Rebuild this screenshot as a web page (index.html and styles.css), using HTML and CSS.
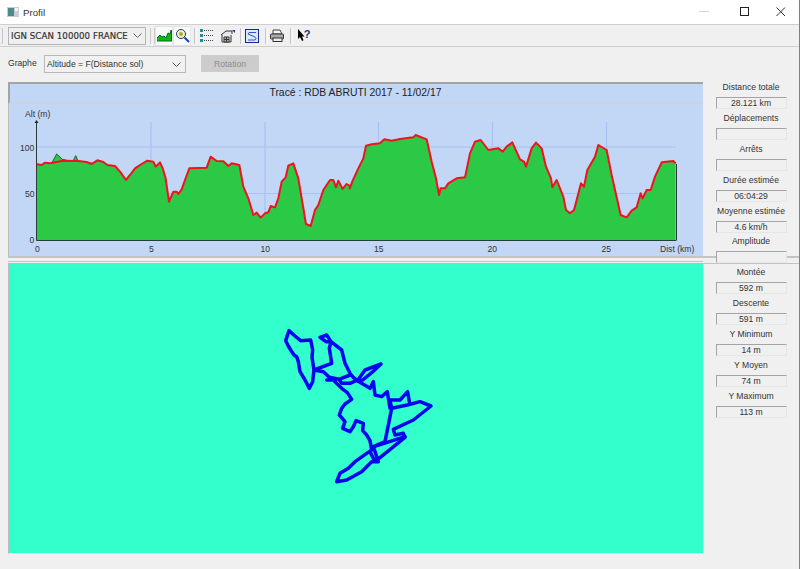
FILE: index.html
```html
<!DOCTYPE html>
<html lang="fr">
<head>
<meta charset="utf-8">
<title>Profil</title>
<link rel="stylesheet" href="styles.css">
</head>
<body>
<div class="app">
  <header class="titlebar">
    <svg class="app-icon" width="12" height="10" viewBox="0 0 12 10"><rect width="12" height="10" fill="#c9ced2"/><rect x="1" y="1" width="6" height="8" fill="#4d8a8a"/><rect x="8" y="1" width="3" height="3" fill="#f4f4f4"/></svg>
    <span class="title-text">Profil</span>
    <div class="win-controls">
      <svg class="win-btn" width="46" height="24" viewBox="0 0 46 24"><path d="M18 11.500h10" stroke="#d5d5d5"/></svg>
      <svg class="win-btn" width="36" height="24" viewBox="0 0 36 24"><rect x="13.500" y="7.500" width="8" height="8" fill="none" stroke="#222"/></svg>
      <svg class="win-btn" width="36" height="24" viewBox="0 0 36 24"><path d="M13.500 7.500l8.500 8.500M22 7.500l-8.500 8.500" stroke="#333" fill="none"/></svg>
    </div>
  </header>

  <nav class="toolbar">
    <span class="tb-stub"></span>
    <div class="tb-combo"><span class="tb-combo-text">IGN SCAN 100000 FRANCE</span>
      <svg width="9" height="5" viewBox="0 0 9 5"><path d="M.5 .5l4 4 4-4" fill="none" stroke="#666"/></svg>
    </div>
    <span class="tb-sep first"></span>
    <span class="tb-btn active">
      <svg width="15" height="13" viewBox="0 0 15 13"><path d="M0 12V9l3-3 2 2 2-1 2 2 2-5 2 1 1-4v11z" fill="#12b812"/><path d="M0 12h15M14.500 12V1M0 9l3-3 2 2 2-1 2 2 2-5 2 1 1-4" fill="none" stroke="#063"/></svg>
    </span>
    <span class="tb-btn active">
      <svg width="15" height="15" viewBox="0 0 15 15"><circle cx="6" cy="6" r="4.500" fill="#e8f2d8" stroke="#245"/><circle cx="6" cy="6" r="2" fill="#b9a32c"/><path d="M9.500 9.500l4.500 4.500" stroke="#1c3fc0" stroke-width="2"/></svg>
    </span>
    <span class="tb-sep tight"></span>
    <span class="tb-icon wide">
      <svg width="14" height="13" viewBox="0 0 14 13"><g fill="#1f8f8f"><rect y="0" width="3" height="3"/><rect y="5" width="3" height="3"/><rect y="10" width="3" height="3"/></g><path d="M4 1.500h10M4 6.500h10M4 11.500h10" stroke="#445" stroke-dasharray="1 1"/></svg>
    </span>
    <span class="tb-icon wide">
      <svg width="15" height="14" viewBox="0 0 15 14"><path d="M1 6l5-4h6v3M2 6v7h9V6" fill="#e8e8e8" stroke="#333"/><path d="M4 8h5v5H4z" fill="#bbb" stroke="#333"/><path d="M6.500 8v5M4 10.500h5" stroke="#333"/><path d="M12 1h3v3z" fill="#123a9c"/></svg>
    </span>
    <span class="tb-sep"></span>
    <span class="tb-icon">
      <svg width="14" height="14" viewBox="0 0 14 14"><rect x=".5" y=".5" width="13" height="13" fill="#dfe8fa" stroke="#1428a0"/><path d="M11 3.500H4L3 5l7 3 1 1.500-1 1.500H3" fill="none" stroke="#2b55c9"/></svg>
    </span>
    <span class="tb-sep"></span>
    <span class="tb-icon">
      <svg width="14" height="13" viewBox="0 0 14 13"><path d="M3 5V1h7l2 4z" fill="#f4f4f4" stroke="#444"/><rect x=".5" y="5" width="13" height="5" rx="1" fill="#aaa" stroke="#333"/><rect x="3" y="9" width="9" height="3.500" fill="#eee" stroke="#333"/></svg>
    </span>
    <span class="tb-sep"></span>
    <span class="tb-icon help">
      <svg width="7" height="13" viewBox="0 0 7 13"><path d="M0 0v10l2-2 2 4 1.500-.7L4 7.500h2.500z" fill="#000"/></svg>
      <span class="help-mark">?</span>
    </span>
  </nav>

  <main class="main">
    <section class="left">
      <div class="controls">
        <label class="graph-label">Graphe</label>
        <div class="select">
          <span>Altitude = F(Distance sol)</span>
          <svg width="9" height="5" viewBox="0 0 9 5"><path d="M.5 .5l4 4 4-4" fill="none" stroke="#555"/></svg>
        </div>
        <button class="rotation" disabled>Rotation</button>
      </div>

      <div class="trace-title">Tracé : RDB ABRUTI 2017 - 11/02/17</div>

      <svg class="chart" width="695" height="152" viewBox="9 104 694 152">
        <g stroke="#a8c0f4" stroke-width="1.200" fill="none">
          <path d="M37 147H676M37 193.500H676"/>
          <path d="M151 122V240M265 122V240M378.500 122V240M492.500 122V240M606.500 122V240"/>
        </g>
        <g transform="translate(0 100) scale(.33333)">
          <path class="peak" d="M155 190L170 162L187 178L205 182L220 182L227 167L235 185L155 192Z"/>
          <path class="notch" d="M112 195L118 206L125 195ZM266 188L272 201L280 190ZM606 203L612 216L620 203Z"/>
          <path class="area" d="M111 420V193L125 195L135 188L150 190L165 187L190 182L235 183L260 186L275 192L292 181L310 186L322 195L345 198L360 215L378 240L390 225L405 205L420 195L442 182L460 185L467 200L480 187L488 205L497 235L507 305L520 275L530 275L535 282L545 268L555 240L568 205L620 203L632 170L650 183L670 184L685 198L695 190L718 195L730 260L745 295L760 345L770 338L782 353L795 340L805 337L812 318L825 322L835 295L845 245L857 232L865 197L880 190L895 235L918 372L932 378L945 330L955 315L970 270L990 240L1000 240L1008 262L1015 242L1028 267L1040 252L1050 258V420Z"/>
          <path class="curve" d="M111 193L125 195L135 188L150 190L165 187L190 182L235 183L260 186L275 192L292 181L310 186L322 195L345 198L360 215L378 240L390 225L405 205L420 195L442 182L460 185L467 200L480 187L488 205L497 235L507 305L520 275L530 275L535 282L545 268L555 240L568 205L620 203L632 170L650 183L670 184L685 198L695 190L718 195L730 260L745 295L760 345L770 338L782 353L795 340L805 337L812 318L825 322L835 295L845 245L857 232L865 197L880 190L895 235L918 372L932 378L945 330L955 315L970 270L990 240L1000 240L1008 262L1015 242L1028 267L1040 252L1050 258"/>
        </g>
        <g transform="translate(350 100) scale(.33333)">
          <path class="area" d="M0 420V265L8 242L25 205L40 175L48 137L65 133L90 130L103 118L125 122L150 117L190 112L197 105L230 118L245 185L258 235L267 285L272 265L285 265L295 250L320 235L345 232L360 160L375 125L392 120L415 150L445 145L458 155L470 140L487 127L510 178L522 185L528 200L545 145L558 128L575 145L588 200L603 235L607 262L620 240L640 290L648 330L660 340L672 330L680 300L693 250L702 260L712 210L735 170L745 135L770 150L785 225L812 345L830 352L845 332L860 322L872 280L878 295L890 270L902 270L915 230L935 187L970 183L977 190V420Z"/>
          <path class="curve" d="M-2 268L8 242L25 205L40 175L48 137L65 133L90 130L103 118L125 122L150 117L190 112L197 105L230 118L245 185L258 235L267 285L272 265L285 265L295 250L320 235L345 232L360 160L375 125L392 120L415 150L445 145L458 155L470 140L487 127L510 178L522 185L528 200L545 145L558 128L575 145L588 200L603 235L607 262L620 240L640 290L648 330L660 340L672 330L680 300L693 250L702 260L712 210L735 170L745 135L770 150L785 225L812 345L830 352L845 332L860 322L872 280L878 295L890 270L902 270L915 230L935 187L970 183L977 190"/>
        </g>
        <path class="axis" d="M36.500 122V240.500H676M676.500 164V240.500"/>
        <path class="arrow" d="M36.500 120l-2 3h4z"/>
        <g class="chart-text">
          <text x="25" y="117">Alt (m)</text>
          <text x="20" y="150.500">100</text>
          <text x="25" y="196.500">50</text>
          <text x="29.500" y="243">0</text>
          <text x="35" y="251.500">0</text>
          <text x="149" y="251.500">5</text>
          <text x="260.500" y="251.500">10</text>
          <text x="374" y="251.500">15</text>
          <text x="487.500" y="251.500">20</text>
          <text x="601.500" y="251.500">25</text>
          <text x="660" y="251.500">Dist (km)</text>
        </g>
      </svg>

      <div class="splitter"></div>

      <svg class="map" width="695" height="291" viewBox="9 263 694 290">
        <g transform="translate(270 320) scale(.33333)">
          <path class="route" d="M57 32L47 62L55 78L62 90L72 105L80 110L85 125L90 155L105 180L118 205L128 185L132 150L126 112L128 90L122 60L92 62L75 48L57 32Z"/>
          <path class="route" d="M132 150L185 130L178 85L183 65L168 65L150 52L170 45L183 65L215 90L225 130L240 160L250 172L262 182L285 150L333 132L305 158L278 180L258 182L240 190L215 190L207 178L240 165"/>
          <path class="route" d="M132 150L160 155L178 172L207 178M170 180L190 180L215 205L232 218L245 238L225 252L215 265L208 285L225 305L218 325L240 335L250 320L258 302L280 310L278 332L290 345L300 362L305 390L290 400L255 425L235 445L210 460L200 485L230 480L275 455L305 425L325 425L310 380L300 395L315 425L405 352L400 340L375 345L370 328L430 300L483 258L450 245L412 255L365 265L360 240L390 240L413 215L418 245"/>
          <path class="route" d="M365 265L345 365L305 382L405 350M262 182L300 205L310 185L315 225L335 230L352 215L360 265"/>
        </g>
      </svg>
    </section>

    <aside class="side">
      <div class="stat"><span>Distance totale</span><b>28.121 km</b></div>
      <div class="stat"><span>Déplacements</span><b></b></div>
      <div class="stat"><span>Arrêts</span><b></b></div>
      <div class="stat"><span>Durée estimée</span><b>06:04:29</b></div>
      <div class="stat"><span>Moyenne estimée</span><b>4.6 km/h</b></div>
      <div class="stat amplitude"><span>Amplitude</span><b></b></div>
      <div class="stat"><span>Montée</span><b>592 m</b></div>
      <div class="stat"><span>Descente</span><b>591 m</b></div>
      <div class="stat"><span>Y Minimum</span><b>14 m</b></div>
      <div class="stat"><span>Y Moyen</span><b>74 m</b></div>
      <div class="stat"><span>Y Maximum</span><b>113 m</b></div>
    </aside>
  </main>
</div>
</body>
</html>
```

FILE: styles.css
```css
* { box-sizing: border-box; }
html, body { margin: 0; height: 100%; overflow: hidden; }
body {
  background: #f0f0f0;
  font-family: "Liberation Sans", Arial, sans-serif;
  font-size: 8.600px;
  color: #222;
}
.app {
  height: 569px;
  display: flex;
  flex-direction: column;
  border-right: 1px solid #5f86ab;
}
.titlebar {
  height: 24px;
  flex: none;
  background: #fff;
  display: flex;
  align-items: center;
  padding-left: 7px;
}
.app-icon { flex: none; }
.title-text { margin-left: 4px; font-size: 9.700px; color: #333; }
.win-controls { margin-left: auto; display: flex; }
.win-btn { display: block; }

.toolbar {
  height: 23px;
  flex: none;
  display: flex;
  align-items: center;
  border-top: 1px solid #cfcfcf;
  border-bottom: 1px solid #cfcfcf;
}
.tb-stub {
  width: 3px;
  height: 16px;
  border-right: 1px solid #c4c4c4;
  border-top: 1px solid #e4e4e4;
  border-bottom: 1px solid #e4e4e4;
  margin-right: 5px;
}
.tb-combo {
  width: 138px;
  height: 18px;
  border: 1px solid #b4b4b4;
  display: flex;
  align-items: center;
  justify-content: space-between;
  padding: 0 3px 0 2px;
  background: #efefef;
}
.tb-combo-text {
  font-family: "DejaVu Sans", sans-serif;
  font-size: 8.600px;
  letter-spacing: .1px;
  color: #333;
  -webkit-text-stroke: .2px #333;
  white-space: nowrap;
}
.tb-sep {
  width: 3px;
  height: 16px;
  border-left: 1px solid #c8c8c8;
  border-right: 1px solid #fafafa;
  margin: 0 2px 0 3px;
  flex: none;
}
.tb-sep.first { margin: 0 0 0 4px; width: 5px; border-right: 1px solid #c8c8c8; }
.tb-sep.tight { margin-right: 0; }
.tb-btn {
  width: 18px;
  height: 20px;
  display: flex;
  align-items: center;
  justify-content: center;
  flex: none;
}
.tb-btn.active { background: #f9f9f9; border: 1px solid #e2e2e2; border-right-color: #e8e8e8; }
.tb-icon {
  display: flex;
  align-items: center;
  justify-content: center;
  width: 14px;
  height: 20px;
  flex: none;
  margin-right: 3px;
}
.tb-icon.wide { width: 20px; margin-right: 0; }
.tb-icon.help { margin-left: 2px; margin-right: 0; }
.help-mark { font: bold 11px "Liberation Sans", sans-serif; color: #14307c; line-height: 12px; margin: -3px 0 0 -1px; }

.main {
  flex: 1;
  min-height: 0;
  display: flex;
}
.left {
  width: 703px;
  flex: none;
  padding-left: 8px;
  display: flex;
  flex-direction: column;
}
.controls {
  height: 35px;
  flex: none;
  display: flex;
  align-items: flex-start;
  padding-top: 8px;
}
.graph-label { width: 36px; padding-top: 3px; font-size: 8.600px; color: #333; }
.select {
  width: 142px;
  height: 18px;
  border: 1px solid #b8b8b8;
  background: #f1f1f1;
  display: flex;
  align-items: center;
  justify-content: space-between;
  padding: 0 4px 0 2px;
  font-size: 8.600px;
  color: #333;
}
.rotation {
  margin-left: 15px;
  width: 58px;
  height: 17px;
  padding: 0;
  border: 1px solid #cdcdcd;
  background: #cccccc;
  color: #8c8c8c;
  font: 8.600px "Liberation Sans", sans-serif;
}
.trace-title {
  height: 22px;
  flex: none;
  background: #c2d7f6;
  border-top: 2px solid #a4a4a4;
  border-left: 2px solid #a4a4a4;
  border-bottom: 2px solid #cfd2d6;
  text-align: center;
  line-height: 17px;
  font-size: 10.400px;
  color: #222;
  padding-right: 2px;
}
.chart, .map { display: block; flex: none; border-left: 1px solid #bdbdbd; }
.chart { background: #c2d7f6; }
.area { fill: #2bc946; stroke: none; }
.curve { fill: none; stroke: #f2121f; stroke-width: 6; stroke-linejoin: round; }
.peak { fill: #2bc946; stroke: #1e5b33; stroke-width: 3; }
.notch { fill: #f3f8fa; stroke: #444; stroke-width: 2; }
.axis { fill: none; stroke: #2a3a3a; stroke-width: 1; }
.arrow { fill: #222; }
.chart-text text { font: 8.600px "Liberation Sans", sans-serif; fill: #333; }
.splitter {
  height: 7px;
  flex: none;
  background: #f0f0f0;
  border-top: 2px solid #c4c4c4;
}
.splitter::after {
  content: "";
  display: block;
  height: 3px;
  border-bottom: 1px solid #c4c4c4;
}
.map { background: #33ffcc; border-bottom: 1px solid #c5fbe9; }
.route { fill: none; stroke: #0505f0; stroke-width: 10.500; stroke-linejoin: round; stroke-linecap: round; }

.side {
  flex: 1;
  display: grid;
  grid-auto-rows: 30.900px;
  align-content: start;
  padding-top: 31px;
  position: relative;
}
.side::before {
  content: "";
  position: absolute;
  left: 0;
  right: 0;
  top: 209px;
  height: 5px;
  border-top: 2px solid #c4c4c4;
  border-bottom: 1px solid #c4c4c4;
}
.stat {
  position: relative;
  display: flex;
  flex-direction: column;
  align-items: center;
  height: 31px;
}
.stat span {
  height: 19px;
  line-height: 17px;
  font-size: 8.600px;
  color: #333;
  white-space: nowrap;
  padding-top: 1px;
}
.stat b {
  width: 71px;
  height: 12px;
  font-weight: normal;
  text-align: center;
  line-height: 11px;
  font-size: 8.600px;
  color: #333;
  background: #f0f0f0;
  border-top: 1px solid #a4a4a4;
  border-left: 1px solid #a4a4a4;
  border-right: 1px solid #e6e6e6;
  border-bottom: 1px solid #e6e6e6;
}
```
